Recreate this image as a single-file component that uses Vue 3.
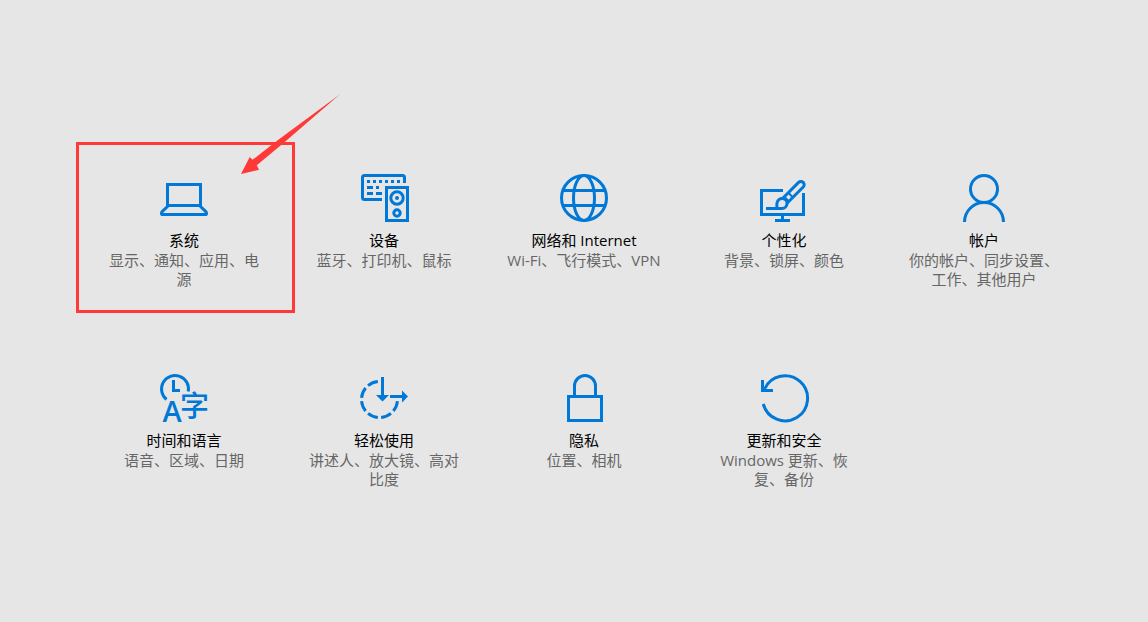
<script setup>
const categories = [
  { id: 'system', title: '系统', detail: '显示、通知、应用、电源', marked: true },
  { id: 'devices', title: '设备', detail: '蓝牙、打印机、鼠标' },
  { id: 'network', title: '网络和 Internet', detail: 'Wi-Fi、飞行模式、VPN' },
  { id: 'personal', title: '个性化', detail: '背景、锁屏、颜色' },
  { id: 'accounts', title: '帐户', detail: '你的帐户、同步设置、工作、其他用户' },
  { id: 'time', title: '时间和语言', detail: '语音、区域、日期' },
  { id: 'ease', title: '轻松使用', detail: '讲述人、放大镜、高对比度' },
  { id: 'privacy', title: '隐私', detail: '位置、相机' },
  { id: 'update', title: '更新和安全', detail: 'Windows 更新、恢复、备份' },
]
</script>

<template>
  <main class="settings">
    <nav class="grid">
      <a v-for="c in categories" :key="c.id" class="tile" :href="'#' + c.id">
        <svg class="icon" viewBox="0 0 48 48" aria-hidden="true">
          <g v-if="c.id === 'system'">
            <rect x="7.5" y="10.5" width="33" height="21" />
            <path d="M8 32L2.2 37.6Q1.5 38.4 1.5 39.4Q1.5 40.5 3 40.5H45Q46.5 40.5 46.5 39.4Q46.5 38.4 45.8 37.6L40 32" />
          </g>
          <g v-else-if="c.id === 'devices'">
            <path d="M44.5 9V3.5Q44.5 1.5 42.5 1.5H4.5Q2.5 1.5 2.5 3.5V23.5Q2.5 25.5 4.5 25.5H22" />
            <path d="M7 7.5H40" stroke-dasharray="3 3" />
            <path d="M7 13.5H13M16 13.5H19M7 19.5H13M16 19.5H22" />
            <rect x="26.5" y="13.5" width="21" height="33" />
            <circle cx="37" cy="24" r="6.2" />
            <circle class="solid" cx="37" cy="24" r="2" />
            <circle cx="37" cy="39" r="3.2" />
          </g>
          <g v-else-if="c.id === 'network'">
            <circle cx="24" cy="24" r="22.5" />
            <ellipse cx="24" cy="24" rx="10.5" ry="22.5" />
            <path d="M3 16.5H45M3 31.5H45" />
          </g>
          <g v-else-if="c.id === 'personal'">
            <path d="M23 16.5H1.5V40.5H43.5V19" />
            <path d="M22.5 42V46M15 46.5H30" />
            <path d="M6 34.5H21" />
            <path d="M22.3 24.8L38.6 8.4A3.2 3.2 0 0 1 43.2 13L27 29.3" />
            <path d="M28 18.5L33.5 24M24 22.5L29.5 28" stroke-width="2" />
            <path d="M16.5 34.5C17.5 33 16.3 30.5 17.2 28.2A5 5 0 1 1 22 34.5Z" />
          </g>
          <g v-else-if="c.id === 'accounts'">
            <circle cx="24" cy="15" r="13.5" />
            <path d="M4.5 48A19.5 19.5 0 0 1 43.5 48" />
          </g>
          <g v-else-if="c.id === 'time'">
            <path d="M6.5 25.5A13.5 13.5 0 1 1 28.3 17.5" />
            <path d="M13.5 6V16.5H20" />
            <text class="letter" x="12" y="48" text-anchor="middle">A</text>
            <text class="hanzi" x="34.5" y="43" text-anchor="middle">字</text>
          </g>
          <g v-else-if="c.id === 'ease'">
            <path d="M19.5 7.5A18 18 0 1 0 37.5 25.5" pathLength="60" stroke-dasharray="7.6 2.4" stroke-dashoffset="-1.2" />
            <path d="M22.5 3V22M30 22.5H43" />
            <path class="solid" d="M16 21H29L22.5 27.5ZM42 16.5V28.5L48 22.5Z" />
          </g>
          <g v-else-if="c.id === 'privacy'">
            <rect x="8.5" y="22.5" width="33" height="24" />
            <path d="M14.5 22V12A10.5 10.5 0 0 1 35.5 12V22" />
          </g>
          <g v-else>
            <path d="M3.3 30A22.5 22.5 0 1 0 4.6 15" />
            <path d="M2.5 6V16.5H13" />
          </g>
        </svg>
        <span class="title">{{ c.title }}</span>
        <span class="detail">{{ c.detail }}</span>
        <span v-if="c.marked" class="mark" aria-hidden="true">
          <svg class="arrow" viewBox="0 0 100 80">
            <path d="M1 80L9.7 63L12.5 65.8L38 46L100 .3L58 36.5L43 49.5L16.8 71.2L19 75.8Z" />
          </svg>
        </span>
      </a>
    </nav>
  </main>
</template>

<style>
body {
  margin: 0;
  background: #e6e6e6;
}
</style>

<style scoped>
.settings {
  box-sizing: border-box;
  min-height: 100vh;
  padding: 158px 64px 48px 84px;
  background: #e6e6e6;
  font-family: "Open Sans", "Noto Sans CJK SC", sans-serif;
  font-size: 15px;
}
.grid {
  display: grid;
  grid-template-columns: repeat(5, 1fr);
  grid-auto-rows: minmax(200px, auto);
}
.tile {
  position: relative;
  display: flex;
  flex-direction: column;
  align-items: center;
  padding: 16px 22px;
  color: #000;
  text-align: center;
  text-decoration: none;
}
.icon {
  width: 48px;
  height: 48px;
  margin-bottom: 8px;
  overflow: visible;
  fill: none;
  stroke: #0078d7;
  stroke-width: 3;
}
.solid,
.letter,
.hanzi {
  fill: #0078d7;
  stroke: none;
}
.letter {
  font-family: "Open Sans", sans-serif;
  font-size: 29px;
  font-weight: 600;
}
.hanzi {
  font-family: "Noto Sans CJK SC", sans-serif;
  font-size: 29px;
  font-weight: 500;
}
.title {
  margin-bottom: 1px;
  line-height: 20px;
}
.detail {
  color: #666;
  line-height: 19px;
}
.mark {
  position: absolute;
  inset: -16px -11px 45px -8px;
  border: 3px solid #ff3838;
  pointer-events: none;
}
.arrow {
  position: absolute;
  top: -51px;
  right: -48px;
  width: 100px;
  height: 80px;
  fill: #ff3838;
}
</style>
